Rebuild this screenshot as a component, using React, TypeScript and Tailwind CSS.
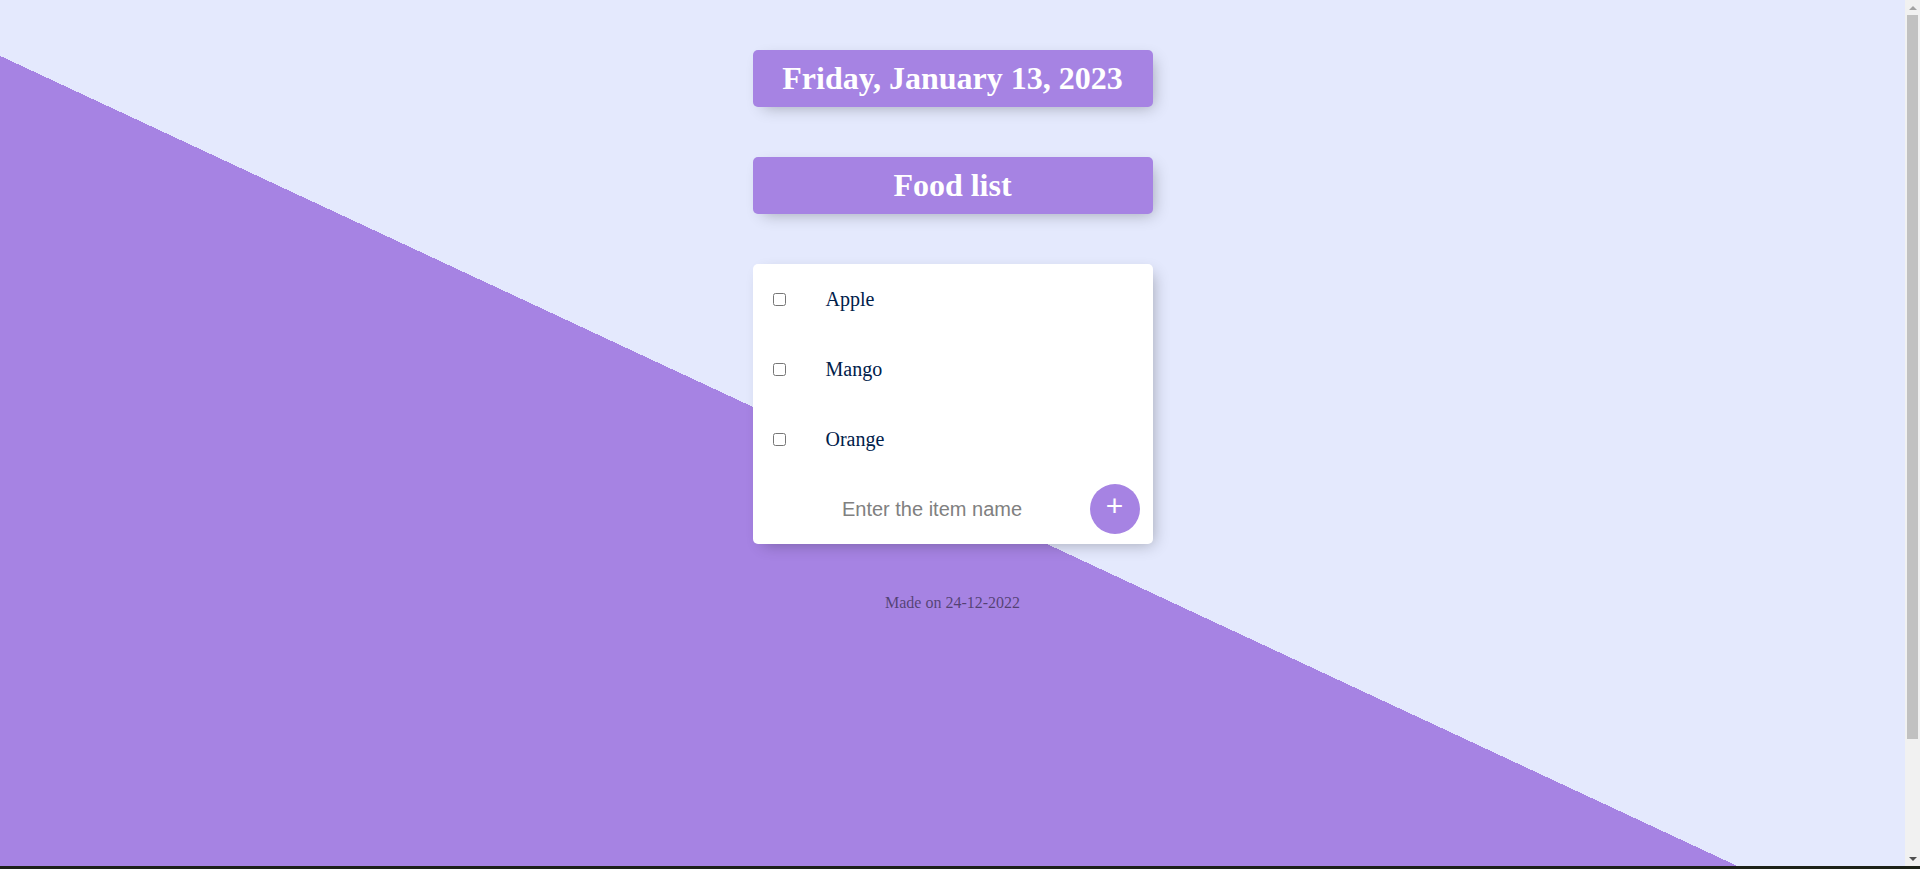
const items = ["Apple", "Mango", "Orange"];

function HeadingBox({ title }: { title: string }) {
  return (
    <div className="w-[400px] rounded-[5px] bg-[#A683E3] text-center shadow-[5px_5px_15px_-5px_rgba(0,0,0,0.3)]">
      <h1 className="p-[10px] text-[32px] font-bold leading-[37px] text-white">{title}</h1>
    </div>
  );
}

function Scrollbar() {
  return (
    <div className="flex w-[15px] shrink-0 flex-col items-center bg-[#f1f1f1]">
      <div className="flex h-[15px] items-center justify-center">
        <div className="h-0 w-0 border-x-[4px] border-b-[4px] border-x-transparent border-b-[#a3a3a3]" />
      </div>
      <div className="h-[724px] w-[11px] bg-[#c1c1c1]" />
      <div className="flex-1" />
      <div className="flex h-[15px] items-center justify-center">
        <div className="h-0 w-0 border-x-[4px] border-t-[4px] border-x-transparent border-t-[#505050]" />
      </div>
    </div>
  );
}

export default function App() {
  return (
    <div className="flex h-screen flex-col overflow-hidden">
      <div className="flex h-[866px] shrink-0">
        <main className="flex-1 overflow-hidden">
          <div className="min-h-[1000px] bg-[linear-gradient(25deg,#A683E3_50%,#E4E9FD_50%)] font-['Liberation_Serif',serif] text-base">
            <div className="flex flex-col items-center gap-[50px] pt-[50px]">
              <HeadingBox title="Friday, January 13, 2023" />
              <HeadingBox title="Food list" />

              <div className="w-[400px] rounded-[5px] bg-white shadow-[5px_5px_15px_-5px_rgba(0,0,0,0.3)]">
                {items.map((name) => (
                  <div key={name} className="flex min-h-[70px] items-center">
                    <input type="checkbox" className="m-5" />
                    <p className="p-5 text-[20px] leading-[23px] text-[#00204a]">{name}</p>
                  </div>
                ))}
                <form
                  className="flex min-h-[70px] items-center pl-[23px]"
                  onSubmit={(e) => e.preventDefault()}
                >
                  <input
                    type="text"
                    placeholder="Enter the item name"
                    autoComplete="off"
                    className="h-[60px] w-[313px] bg-transparent text-center font-['Liberation_Sans',sans-serif] text-[20px] outline-none placeholder:text-[grey]"
                  />
                  <button
                    type="submit"
                    className="ml-px flex h-[50px] w-[50px] items-center justify-center rounded-full bg-[#A683E3] pb-[6px] font-['Liberation_Sans',sans-serif] text-[30px] leading-none text-white"
                  >
                    +
                  </button>
                </form>
              </div>

              <footer className="text-center leading-[18px] text-black/50">Made on 24-12-2022</footer>
            </div>
          </div>
        </main>
        <Scrollbar />
      </div>
      <div className="h-[3px] shrink-0 bg-[#1c2118]" />
    </div>
  );
}
